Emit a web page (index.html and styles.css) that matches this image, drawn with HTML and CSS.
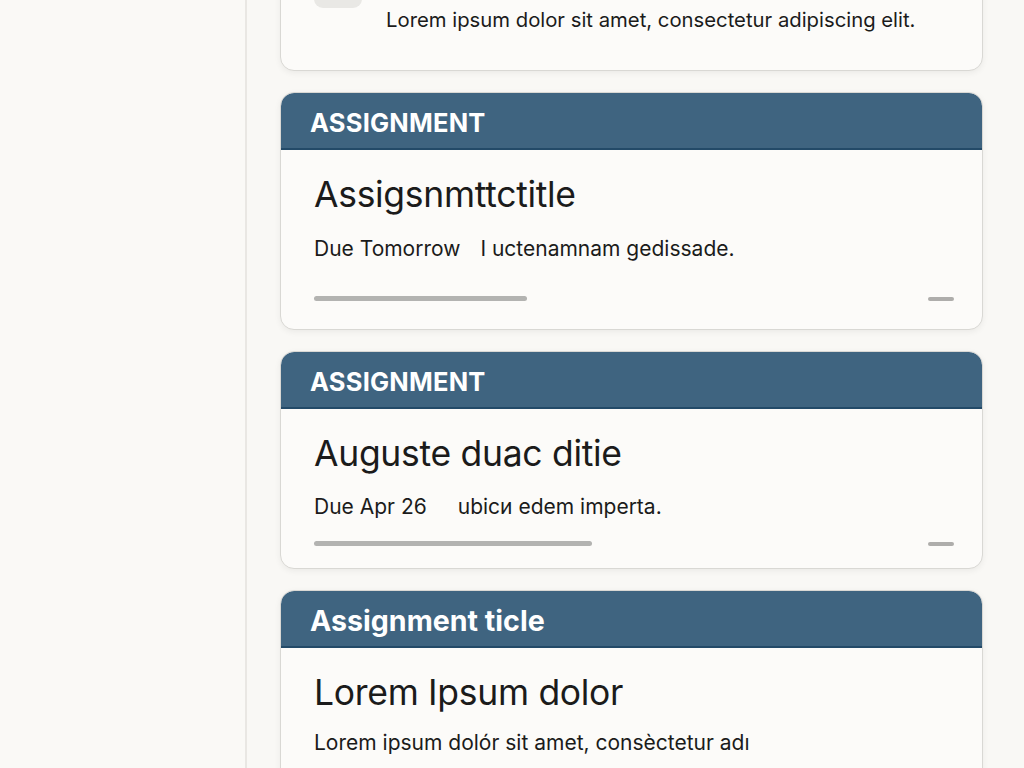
FILE: index.html
```html
<!DOCTYPE html>
<html lang="en">
<head>
<meta charset="utf-8">
<title>Assignments</title>
<link rel="stylesheet" href="styles.css">
</head>
<body>
<div class="layout">
  <aside class="sidebar"></aside>
  <main class="feed">
    <section class="card card-intro">
      <div class="chip"></div>
      <p class="intro-text">Lorem ipsum dolor sit amet, consectetur adipiscing elit.</p>
    </section>

    <section class="card">
      <header class="card-head"><h2 class="head-label caps">ASSIGNMENT</h2></header>
      <div class="card-body">
        <h3 class="title">Assigsnmttctitle</h3>
        <p class="meta"><span class="due">Due Tomorrow</span><span class="desc">I uctenamnam gedissade.</span></p>
        <div class="progress-row row-a">
          <div class="bar" style="width:213px"></div>
          <div class="dash"></div>
        </div>
      </div>
    </section>

    <section class="card">
      <header class="card-head"><h2 class="head-label caps">ASSIGNMENT</h2></header>
      <div class="card-body">
        <h3 class="title">Auguste duac ditie</h3>
        <p class="meta meta-b"><span class="due">Due Apr 26</span><span class="desc desc-b">ubicи edem imperta.</span></p>
        <div class="progress-row row-b">
          <div class="bar" style="width:278px"></div>
          <div class="dash"></div>
        </div>
      </div>
    </section>

    <section class="card card-last">
      <header class="card-head"><h2 class="head-label mixed">Assignment ticle</h2></header>
      <div class="card-body">
        <h3 class="title">Lorem Ipsum dolor</h3>
        <p class="meta meta-c">Lorem ipsum dolór sit amet, consèctetur adı</p>
      </div>
    </section>
  </main>
</div>
</body>
</html>
```
FILE: styles.css
```css
html, body {
  margin: 0;
  padding: 0;
  height: 100%;
  overflow: hidden;
  background: #f9f8f5;
  font-family: Inter, "Noto Sans", sans-serif;
  color: #1b1b1b;
}

.layout {
  display: flex;
  height: 768px;
  overflow: hidden;
}

.sidebar {
  width: 245px;
  flex: none;
  background: #faf9f6;
  border-right: 2px solid #e9e7e3;
}

.feed {
  flex: none;
  width: 703px;
  padding-left: 33px;
  display: flex;
  flex-direction: column;
  gap: 21px;
}

.card {
  background: #fcfbf9;
  border: 1px solid #d9d8d4;
  border-radius: 14px;
  box-shadow: 0 2px 6px rgba(0, 0, 0, 0.06);
  overflow: hidden;
  flex: none;
}

.card-intro {
  margin-top: -40px;
  padding: 0 33px 38px;
}

.chip {
  width: 48px;
  height: 47px;
  background: #e9e8e5;
  border-radius: 0 0 9px 9px;
}

.intro-text {
  margin: 0;
  padding-left: 72px;
  font-size: 20.3px;
  line-height: 24px;
}

.card-head {
  background: #3f6480;
  height: 50px;
  padding-top: 5px;
  border-bottom: 2px solid #234a68;
  display: flex;
  align-items: center;
  padding-left: 29px;
  border-radius: 13px 13px 0 0;
}

.head-label {
  margin: 0;
  color: #ffffff;
  font-weight: 700;
  line-height: 1;
}

.caps {
  font-size: 25.5px;
  letter-spacing: 0.2px;
}

.mixed {
  font-size: 28.6px;
}

.card-body {
  padding: 23px 33px 0;
}

.card-last .card-body {
  padding-bottom: 60px;
}

.title {
  margin: 0;
  font-size: 35.5px;
  font-weight: 400;
  line-height: 44px;
  letter-spacing: -0.3px;
}

.meta {
  margin: 20px 0 0;
  font-size: 21px;
  line-height: 24px;
  letter-spacing: 0;
}

.meta-b {
  margin-top: 19px;
}

.meta-c {
  margin-top: 16px;
}

.desc {
  margin-left: 20px;
}

.desc-b {
  margin-left: 31px;
}

.progress-row {
  display: flex;
  align-items: center;
  justify-content: space-between;
}

.row-a {
  margin-top: 35px;
  margin-bottom: 28px;
}

.row-b {
  margin-top: 22px;
  margin-bottom: 22px;
}

.bar {
  height: 5px;
  background: #b3b3b1;
  border-radius: 3px;
}

.dash {
  width: 26px;
  height: 4px;
  background: #aeadab;
  border-radius: 2px;
  margin-right: -5px;
}
```
